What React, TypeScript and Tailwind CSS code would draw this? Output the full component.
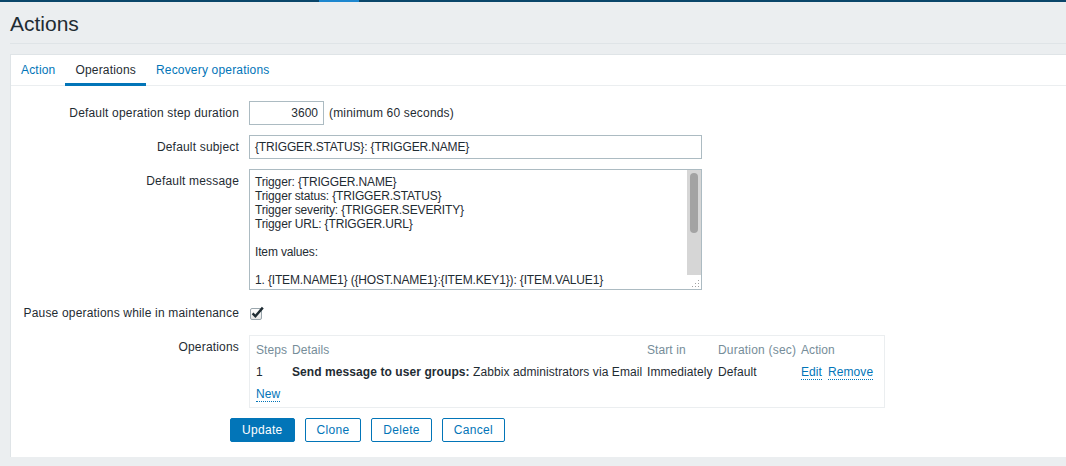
const messageLines = [
  'Trigger: {TRIGGER.NAME}',
  'Trigger status: {TRIGGER.STATUS}',
  'Trigger severity: {TRIGGER.SEVERITY}',
  'Trigger URL: {TRIGGER.URL}',
  '',
  'Item values:',
  '',
  '1. {ITEM.NAME1} ({HOST.NAME1}:{ITEM.KEY1}): {ITEM.VALUE1}',
];

function Label({ children }: { children: React.ReactNode }) {
  return <div className="w-[228px] shrink-0 text-right leading-6">{children}</div>;
}

function Row({ label, children }: { label: string; children: React.ReactNode }) {
  return (
    <div className="flex items-start gap-[10px] py-[5px]">
      <Label>{label}</Label>
      <div className="flex items-start">{children}</div>
    </div>
  );
}

function LinkText({ children }: { children: React.ReactNode }) {
  return (
    <span className="inline-block leading-[14px] text-[#0275b8] border-b border-dotted border-[#0275b8]">
      {children}
    </span>
  );
}

function Checkbox() {
  return (
    <svg width="16" height="16" viewBox="0 0 16 16" className="ml-[1px]">
      <defs>
        <linearGradient id="cb" x1="0" y1="0" x2="0" y2="1">
          <stop offset="0" stopColor="#ffffff" />
          <stop offset="1" stopColor="#e4e4e4" />
        </linearGradient>
      </defs>
      <rect x="0.5" y="3.5" width="11" height="11" rx="1.5" fill="url(#cb)" stroke="#9aa6ad" />
      <path d="M2.6 8.4 L5.4 11.3 L12.8 2.6" fill="none" stroke="#1f2c33" strokeWidth="2.4" strokeLinejoin="miter" />
    </svg>
  );
}

export default function App() {
  return (
    <div className="w-[1066px] h-[466px] overflow-hidden bg-[#ebeef0] text-[12px] tracking-[0.18px] text-[#1f2c33] font-['Liberation_Sans',Arial,sans-serif]">
      <div className="flex h-[2px] bg-[#0a466a]">
        <div className="ml-[319px] w-[40px] bg-[#1d87cf]" />
      </div>

      <div className="ml-[10px] h-[42px] border-b border-[#dfe4e7] pt-[10px]">
        <h1 className="text-[21px] leading-6 tracking-normal">Actions</h1>
      </div>

      <div className="ml-[10px] mt-[10px] bg-white border-t border-l border-[#dfe4e7]">
        <div className="flex h-[31px] border-b border-[#ebeef0]">
          <div className="flex items-center px-[10px] text-[#0275b8]">Action</div>
          <div className="relative flex items-center px-[10px]">
            Operations
            <span className="absolute left-0 right-0 bottom-[-1px] h-[3px] bg-[#0275b8]" />
          </div>
          <div className="flex items-center px-[10px] text-[#0275b8]">Recovery operations</div>
        </div>

        <div className="pt-[10px] pb-[10px]">
          <Row label="Default operation step duration">
            <div className="w-[75px] h-6 border border-[#acbbc2] px-[5px] text-right leading-[22px] tracking-normal">3600</div>
            <span className="ml-[5px] leading-6">(minimum 60 seconds)</span>
          </Row>

          <Row label="Default subject">
            <div className="w-[453px] h-6 border border-[#acbbc2] px-[5px] leading-[22px] tracking-[-0.15px]">
              {'{TRIGGER.STATUS}: {TRIGGER.NAME}'}
            </div>
          </Row>

          <Row label="Default message">
            <div className="flex w-[453px] h-[121px] border border-[#acbbc2]">
              <div className="flex-1 overflow-hidden pt-[5px] pl-[5px] leading-[14px] whitespace-pre tracking-[-0.15px]">
                {messageLines.map((line, i) => (
                  <div key={i} className="h-[14px]">{line}</div>
                ))}
              </div>
              <div className="flex w-[14px] flex-col">
                <div className="flex-1 bg-[#d6d6d6] pt-[3px]">
                  <div className="mx-auto w-[8px] h-[60px] rounded-full bg-[#a3a3a3]" />
                </div>
                <div className="h-[14px] bg-white">
                  <svg width="14" height="14" viewBox="0 0 14 14">
                    <rect x="11" y="5" width="1" height="1" fill="#a0a0a0" />
                    <rect x="8" y="8" width="1" height="1" fill="#a0a0a0" />
                    <rect x="11" y="8" width="1" height="1" fill="#a0a0a0" />
                    <rect x="5" y="11" width="1" height="1" fill="#a0a0a0" />
                    <rect x="8" y="11" width="1" height="1" fill="#a0a0a0" />
                    <rect x="11" y="11" width="1" height="1" fill="#a0a0a0" />
                  </svg>
                </div>
              </div>
            </div>
          </Row>

          <div className="flex items-center gap-[10px] pt-[6px] pb-[5px]">
            <Label>Pause operations while in maintenance</Label>
            <div className="flex h-6 items-center">
              <Checkbox />
            </div>
          </div>

          <Row label="Operations">
            <div className="w-[636px] border border-[#ebeef0] px-[6px] pt-[3px] pb-[2px] tracking-[0.08px]">
              <table className="w-full border-collapse text-left">
                <colgroup>
                  <col className="w-[36px]" />
                  <col className="w-[355px]" />
                  <col className="w-[71px]" />
                  <col className="w-[83px]" />
                  <col />
                </colgroup>
                <thead>
                  <tr className="h-[22px] text-[#768d99]">
                    <th className="font-normal p-0">Steps</th>
                    <th className="font-normal p-0">Details</th>
                    <th className="font-normal p-0">Start in</th>
                    <th className="font-normal p-0 tracking-[0.2px]">Duration (sec)</th>
                    <th className="font-normal p-0">Action</th>
                  </tr>
                </thead>
                <tbody>
                  <tr className="h-[22px]">
                    <td className="p-0">1</td>
                    <td className="p-0 whitespace-nowrap">
                      <b>Send message to user groups:</b> Zabbix administrators via Email
                    </td>
                    <td className="p-0">Immediately</td>
                    <td className="p-0">Default</td>
                    <td className="p-0 whitespace-nowrap">
                      <LinkText>Edit</LinkText>
                      <span className="ml-[6px]">
                        <LinkText>Remove</LinkText>
                      </span>
                    </td>
                  </tr>
                  <tr className="h-[22px]">
                    <td className="p-0" colSpan={5}>
                      <LinkText>New</LinkText>
                    </td>
                  </tr>
                </tbody>
              </table>
            </div>
          </Row>

          <div className="flex gap-[10px] pl-[219px] py-[5px] tracking-[0.3px]">
            <button className="h-6 rounded-[2px] border border-[#0275b8] bg-[#0275b8] px-[11px] text-white">Update</button>
            <button className="h-6 rounded-[2px] border border-[#0275b8] bg-white px-[11px] text-[#0275b8]">Clone</button>
            <button className="h-6 rounded-[2px] border border-[#0275b8] bg-white px-[11px] text-[#0275b8]">Delete</button>
            <button className="h-6 rounded-[2px] border border-[#0275b8] bg-white px-[11px] text-[#0275b8]">Cancel</button>
          </div>
        </div>
      </div>
    </div>
  );
}
